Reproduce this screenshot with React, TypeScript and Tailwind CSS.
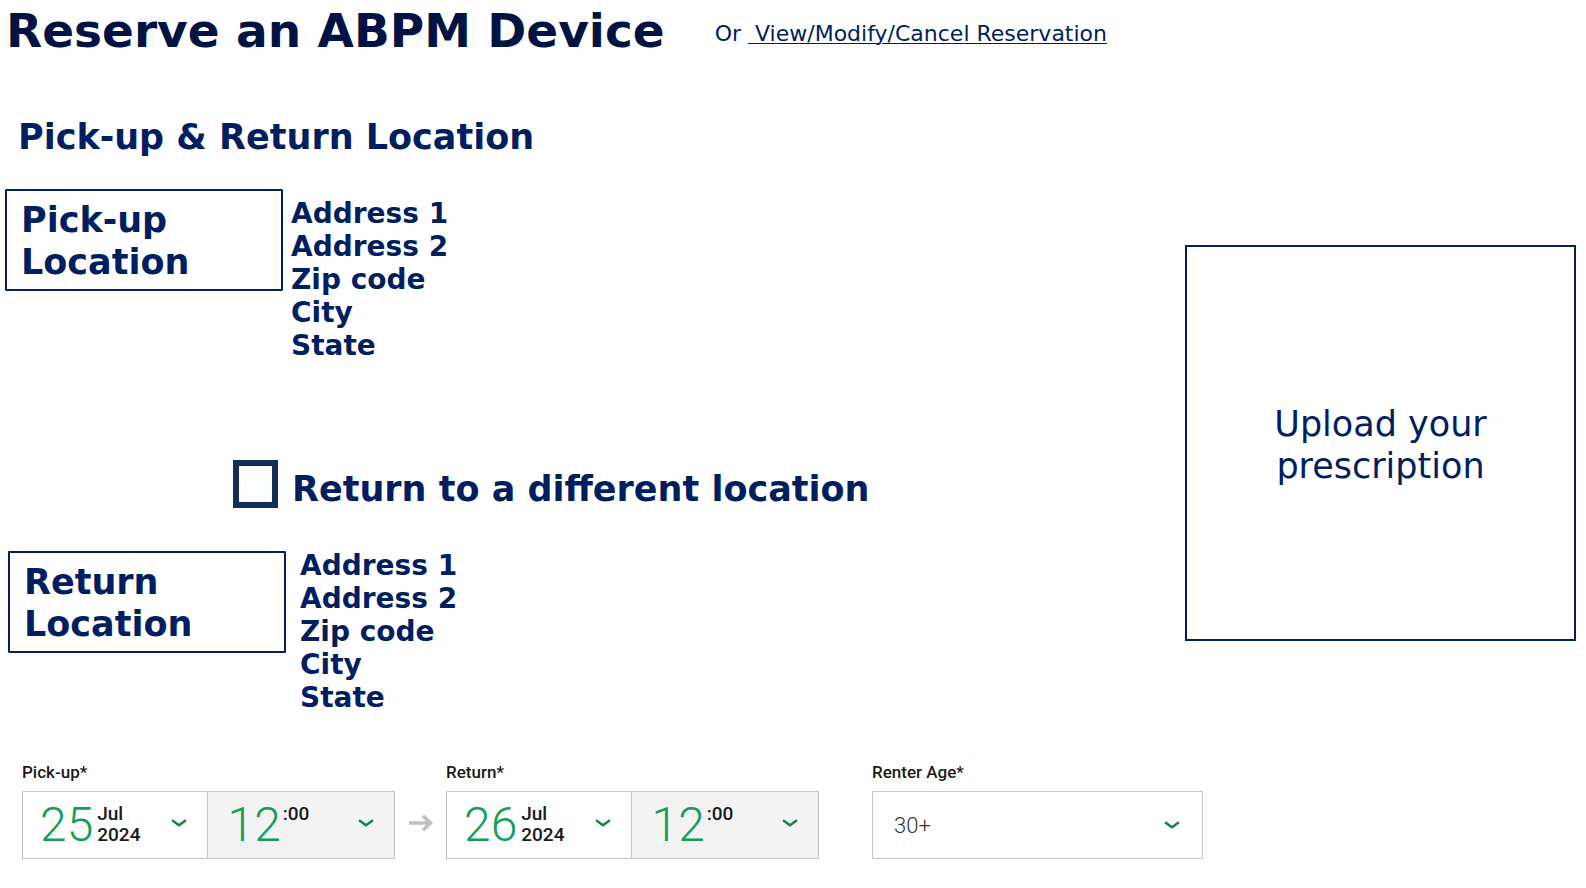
import { useState } from "react";

const ADDRESS_LINES = ["Address 1", "Address 2", "Zip code", "City", "State"];

function Chevron() {
  return (
    <svg width="16" height="8" viewBox="0 0 16 8" fill="none" aria-hidden="true" className="shrink-0">
      <path d="M1 1.2 C3.2 2.6 5.4 4.4 8 6.3 C10.6 4.4 12.8 2.6 15 1.2" stroke="#0f8449" strokeWidth="2.4" />
    </svg>
  );
}

function Arrow() {
  return (
    <svg width="24" height="18" viewBox="0 0 24 18" fill="none" aria-hidden="true">
      <path d="M0 9 H21 M14 1.8 L21.5 9 L14 16.2" stroke="#c1c1c1" strokeWidth="3.6" />
    </svg>
  );
}

function AddressList() {
  return (
    <ul className="text-[28px] leading-[33px] font-bold">
      {ADDRESS_LINES.map((line) => (
        <li key={line}>{line}</li>
      ))}
    </ul>
  );
}

function LocationButton({ name }: { name: string }) {
  return (
    <button
      type="button"
      className="w-[278px] rounded-[1px] border-2 border-[#001e60] px-3.5 pt-2 pb-1.5 text-left text-[35px] leading-[42px] font-bold"
    >
      {name}
      <br />
      Location
    </button>
  );
}

function DateTimeField({ label, day }: { label: string; day: string }) {
  return (
    <div role="group" aria-label={label} className="flex-[373]">
      <div className="mb-2 text-[17px] leading-[22px] font-medium">{label}*</div>
      <div className="flex h-[68px] border border-[#c6c6c6]">
        <button type="button" className="flex flex-1 items-center pr-5 pb-1 pl-[17px]">
          <span className="pt-1 text-[48px] leading-[48px] font-light text-[#149e58]">{day}</span>
          <span className="ml-1 flex-1 pt-0.5 text-left text-[19px] leading-[21px] font-medium">
            Jul
            <br />
            2024
          </span>
          <Chevron />
        </button>
        <button type="button" className="flex flex-1 items-center border-l border-[#c6c6c6] bg-[#f3f3f3] pr-5 pb-1 pl-5">
          <span className="pt-1 text-[48px] leading-[48px] font-light text-[#149e58]">12</span>
          <span className="ml-0.5 flex-1 pt-0.5 pb-[21px] text-left text-[19px] leading-[21px] font-medium">:00</span>
          <Chevron />
        </button>
      </div>
    </div>
  );
}

export default function App() {
  const [different, setDifferent] = useState(false);

  return (
    <div className="min-h-screen bg-white pb-7 font-['DejaVu_Sans',sans-serif] text-[#001e60]">
      <header className="flex items-start pl-1.5">
        <h1 className="text-[47px] leading-[62px] font-bold text-[#001343]">Reserve an ABPM Device</h1>
        <p className="ml-[50px] pt-5 text-[22px] leading-7">
          Or{" "}
          <a href="#reservation" className="whitespace-pre underline decoration-1 underline-offset-2">
            {" View/Modify/Cancel Reservation"}
          </a>
        </p>
      </header>

      <main>
        <h2 className="mt-[54px] pl-[18px] text-[35px] leading-[42px] font-bold">Pick-up &amp; Return Location</h2>

        <div className="mt-[31px] flex items-start justify-between pr-2.5 pl-[5px]">
          <div>
            <section className="flex items-start gap-2">
              <LocationButton name="Pick-up" />
              <div className="pt-2">
                <AddressList />
              </div>
            </section>

            <label className="mt-[98px] flex items-start gap-3.5 pl-[228px]">
              <input
                type="checkbox"
                checked={different}
                onChange={(e) => setDifferent(e.target.checked)}
                className="h-12 w-[45px] shrink-0 appearance-none border-6 border-[#142d55] bg-white checked:bg-[#142d55]"
              />
              <span className="pt-2 text-[35px] leading-[42px] font-bold">Return to a different location</span>
            </label>

            <section className="mt-[39px] flex items-start gap-3.5 pl-[3px]">
              <div className="pt-0.5">
                <LocationButton name="Return" />
              </div>
              <AddressList />
            </section>
          </div>

          <button
            type="button"
            className="mt-14 h-[396px] w-[391px] shrink-0 border-2 border-[#001e60] pt-1 text-[35px] leading-[42px]"
          >
            Upload your
            <br />
            prescription
          </button>
        </div>

        <form className="mt-[47px] ml-[22px] flex max-w-[1181px] font-['Roboto',sans-serif] text-[#1a1a1a]">
          <DateTimeField label="Pick-up" day="25" />
          <div className="flex h-[98px] flex-[51] items-end justify-center pb-[27px]">
            <Arrow />
          </div>
          <DateTimeField label="Return" day="26" />
          <div className="flex-[53]" />
          <div className="flex-[331]">
            <label htmlFor="age" className="mb-2 block text-[17px] leading-[22px] font-medium">
              Renter Age*
            </label>
            <div className="grid h-[68px] items-center border border-[#c6c6c6]">
              <select
                id="age"
                defaultValue="30+"
                className="col-start-1 row-start-1 h-full w-full appearance-none bg-white px-[21px] text-[22px] font-light text-[#333333]"
              >
                <option>30+</option>
                <option>25-29</option>
                <option>18-24</option>
              </select>
              <div className="pointer-events-none col-start-1 row-start-1 justify-self-end pr-[22px]">
                <Chevron />
              </div>
            </div>
          </div>
        </form>
      </main>
    </div>
  );
}
